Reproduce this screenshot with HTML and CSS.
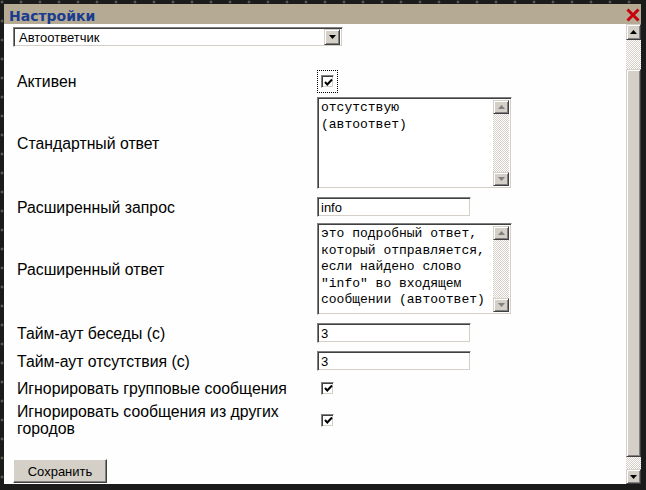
FILE: index.html
```html
<!DOCTYPE html>
<html lang="ru">
<head>
<meta charset="utf-8">
<title>Настройки</title>
<link rel="stylesheet" href="styles.css">
</head>
<body>
<div class="window">
  <div class="titlebar">
    <span class="title">Настройки</span>
    <svg class="close" width="14" height="14" viewBox="0 0 14 14"><path d="M1.5 1.5 L12.5 12.5 M12.5 1.5 L1.5 12.5" stroke="#c8000c" stroke-width="3" fill="none"/></svg>
  </div>
  <div class="body">
    <div class="content">
      <div class="select">
        <span class="select-text">Автоответчик</span>
        <span class="sb-btn select-btn"><svg width="7" height="4" viewBox="0 0 7 4"><path d="M0 0 H7 L3.5 4 Z" fill="#000"/></svg></span>
      </div>

      <div class="row row-active">
        <span class="label">Активен</span>
        <span class="focus"><span class="cb"><svg width="9" height="9" viewBox="0 0 9 9"><polyline points="1,4 3.3,6.5 8,1.5" stroke="#000" stroke-width="2" fill="none"/></svg></span></span>
      </div>

      <div class="row row-std">
        <span class="label">Стандартный ответ</span>
        <div class="ta">
          <div class="ta-text">отсутствую<br>(автоответ)</div>
          <div class="ta-scroll">
            <span class="sb-btn ta-btn"><svg width="7" height="4" viewBox="0 0 7 4"><path d="M0 4 H7 L3.5 0 Z" fill="#808080"/></svg></span>
            <span class="track"></span>
            <span class="sb-btn ta-btn"><svg width="7" height="4" viewBox="0 0 7 4"><path d="M0 0 H7 L3.5 4 Z" fill="#808080"/></svg></span>
          </div>
        </div>
      </div>

      <div class="row row-req">
        <span class="label">Расширенный запрос</span>
        <span class="input">info</span>
      </div>

      <div class="row row-ext">
        <span class="label">Расширенный ответ</span>
        <div class="ta">
          <div class="ta-text">это подробный ответ, который отправляется, если найдено слово "info" во входящем сообщении (автоответ)</div>
          <div class="ta-scroll">
            <span class="sb-btn ta-btn"><svg width="7" height="4" viewBox="0 0 7 4"><path d="M0 4 H7 L3.5 0 Z" fill="#808080"/></svg></span>
            <span class="track"></span>
            <span class="sb-btn ta-btn"><svg width="7" height="4" viewBox="0 0 7 4"><path d="M0 0 H7 L3.5 4 Z" fill="#808080"/></svg></span>
          </div>
        </div>
      </div>

      <div class="row row-t1">
        <span class="label">Тайм-аут беседы (с)</span>
        <span class="input">3</span>
      </div>

      <div class="row row-t2">
        <span class="label">Тайм-аут отсутствия (с)</span>
        <span class="input">3</span>
      </div>

      <div class="row row-g1">
        <span class="label">Игнорировать групповые сообщения</span>
        <span class="cb cb-plain"><svg width="9" height="9" viewBox="0 0 9 9"><polyline points="1,4 3.3,6.5 8,1.5" stroke="#000" stroke-width="2" fill="none"/></svg></span>
      </div>

      <div class="row row-g2">
        <span class="label">Игнорировать сообщения из других городов</span>
        <span class="cb cb-plain"><svg width="9" height="9" viewBox="0 0 9 9"><polyline points="1,4 3.3,6.5 8,1.5" stroke="#000" stroke-width="2" fill="none"/></svg></span>
      </div>

      <button class="btn" type="button">Сохранить</button>
    </div>

    <div class="vscroll">
      <span class="sb-btn vs-up"><svg width="7" height="4" viewBox="0 0 7 4"><path d="M0 4 H7 L3.5 0 Z" fill="#000"/></svg></span>
      <div class="vs-track"><div class="vs-thumb"></div></div>
      <span class="sb-btn vs-down"><svg width="7" height="4" viewBox="0 0 7 4"><path d="M0 0 H7 L3.5 4 Z" fill="#000"/></svg></span>
    </div>
  </div>
</div>
</body>
</html>
```

FILE: styles.css
```css
html, body {
  margin: 0;
  padding: 0;
  background: #1b1b1b;
}

.window {
  width: 646px;
  height: 490px;
  box-sizing: border-box;
  padding: 4px 5px 6px 4px;
  background-color: #1b1b1b;
  background-image: radial-gradient(circle, #8a8a80 0.8px, transparent 1.3px);
  background-size: 19px 19px;
  background-position: -7.5px -7.5px;
  display: flex;
  flex-direction: column;
}

.titlebar {
  height: 20px;
  flex: none;
  background: #b5aa94;
  display: flex;
  align-items: center;
  justify-content: space-between;
  padding: 0 1px 0 5px;
}

.title {
  font: bold 14px "DejaVu Sans", sans-serif;
  color: #1a3c8f;
  padding-top: 3px;
}

.close {
  display: block;
  margin-top: 2px;
}

.body {
  flex: 1;
  display: flex;
  min-height: 0;
}

.content {
  flex: 1;
  background: #fdfefd;
  overflow: hidden;
  padding: 3px 0 0 9px;
  font-family: "Liberation Sans", Arial, sans-serif;
  color: #000;
}

/* classic sunken field */
.select, .input, .ta {
  box-sizing: border-box;
  border: 1px solid;
  border-color: #808080 #ffffff #ffffff #808080;
  box-shadow: inset 1px 1px 0 #404040, inset -1px -1px 0 #d4d0c8;
  background: #ffffff;
}

.select {
  width: 330px;
  height: 20px;
  display: flex;
  align-items: center;
  padding: 2px;
}

.select-text {
  flex: 1;
  font-size: 13px;
  padding-left: 3px;
}

/* raised classic button */
.sb-btn {
  box-sizing: border-box;
  display: flex;
  align-items: center;
  justify-content: center;
  background: #d4d0c8;
  border: 1px solid;
  border-color: #d4d0c8 #404040 #404040 #d4d0c8;
  box-shadow: inset 1px 1px 0 #ffffff, inset -1px -1px 0 #808080;
}

.sb-btn svg {
  display: block;
}

.select-btn {
  width: 16px;
  height: 16px;
}

.row {
  display: flex;
  align-items: center;
  min-height: 20px;
}

.label {
  width: 304px;
  flex: none;
  box-sizing: border-box;
  padding: 0 10px 0 4px;
  font-size: 15.8px;
  line-height: 17px;
}

.row-active { margin-top: 23px; }
.row-std { margin-top: 4px; }
.row-req { margin-top: 8px; }
.row-ext { margin-top: 6px; }
.row-t1 { margin-top: 8px; }
.row-t2 { margin-top: 8px; }
.row-g1 { margin-top: 7px; }
.row-g2 { margin-top: 5px; }

.focus {
  display: flex;
  outline: 1px dotted #000;
  outline-offset: -1px;
  padding: 5px 4px;
}

.cb {
  box-sizing: border-box;
  width: 13px;
  height: 13px;
  display: flex;
  align-items: center;
  justify-content: center;
  background: #ffffff;
  border: 1px solid;
  border-color: #808080 #ffffff #ffffff #808080;
  box-shadow: inset 1px 1px 0 #404040, inset -1px -1px 0 #d4d0c8;
}

.cb svg {
  display: block;
  margin: 1px 0 0 1px;
}

.cb-plain {
  margin-left: 4px;
}

.input {
  width: 154px;
  height: 20px;
  padding: 2px 3px;
  font-size: 13px;
  line-height: 16px;
}

.ta {
  width: 195px;
  height: 92px;
  display: flex;
  padding: 2px;
}

.ta-text {
  flex: 1;
  font: 13px/16.5px "Liberation Mono", "Courier New", monospace;
  padding-left: 1px;
  white-space: pre-wrap;
  overflow: hidden;
}

.ta-scroll {
  width: 16px;
  display: flex;
  flex-direction: column;
}

.ta-btn {
  height: 14px;
}

.track, .vs-track {
  flex: 1;
  background-color: #ffffff;
  background-image: conic-gradient(#d4d0c8 25%, #ffffff 0 50%, #d4d0c8 0 75%, #ffffff 0);
  background-size: 2px 2px;
}

.btn {
  display: block;
  margin-top: 22px;
  width: 94px;
  height: 24px;
  font: 13px "Liberation Sans", Arial, sans-serif;
  color: #000;
  background: #d4d0c8;
  border: 1px solid;
  border-color: #ffffff #404040 #404040 #ffffff;
  box-shadow: inset -1px -1px 0 #808080;
  padding: 0;
}

.vscroll {
  width: 15px;
  flex: none;
  display: flex;
  flex-direction: column;
}

.vs-up {
  height: 16px;
}

.vs-down {
  height: 15px;
}

.vs-track {
  display: flex;
  flex-direction: column;
  padding: 29px 0 12px;
}

.vs-thumb {
  flex: 1;
  box-sizing: border-box;
  background: #d4d0c8;
  border: 1px solid;
  border-color: #d4d0c8 #404040 #404040 #d4d0c8;
  box-shadow: inset 1px 1px 0 #ffffff, inset -1px -1px 0 #808080;
}
```
